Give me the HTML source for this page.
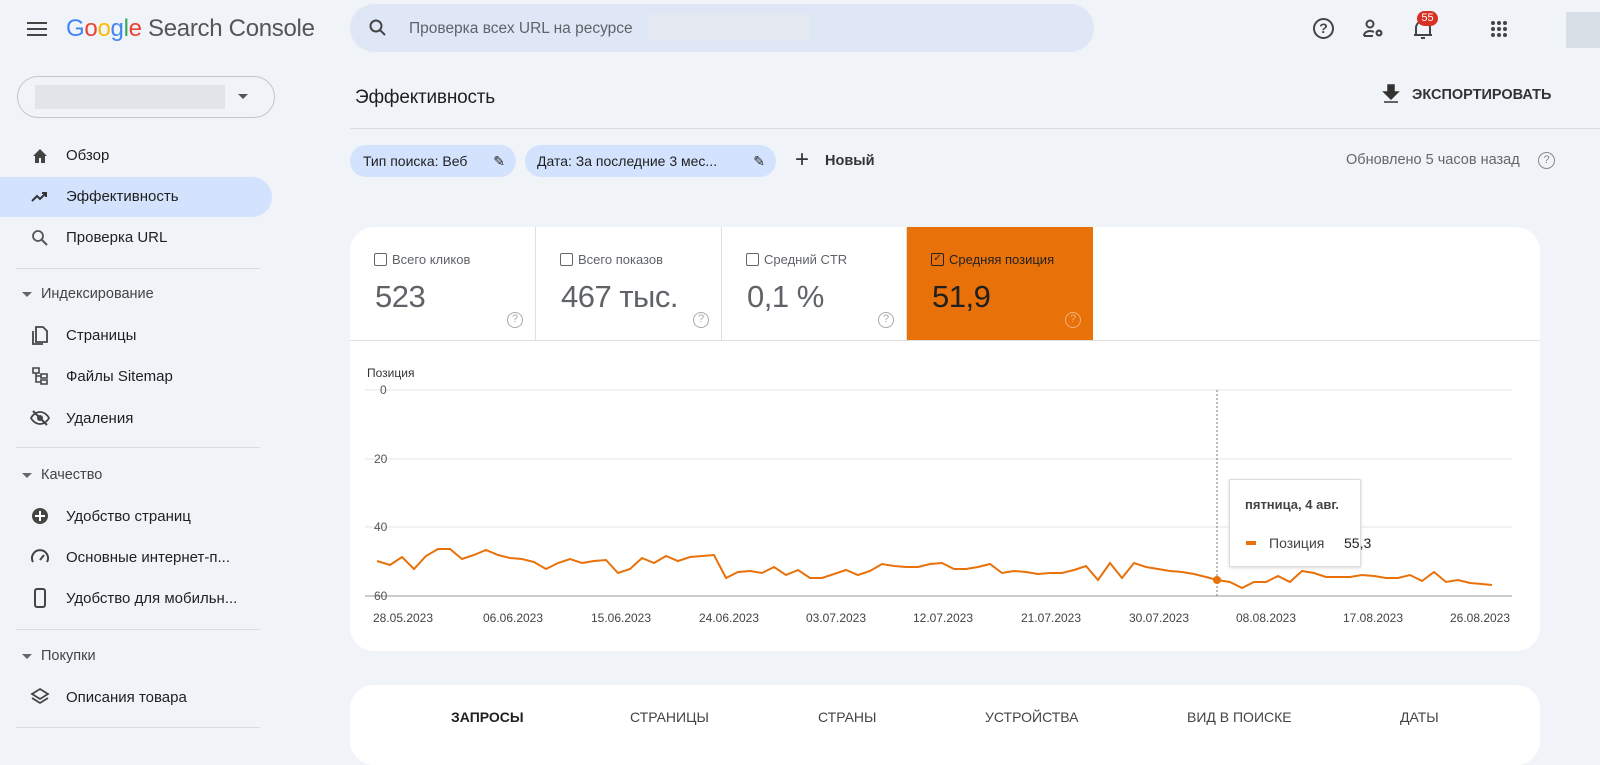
<!DOCTYPE html>
<html><head><meta charset="utf-8"><style>
*{box-sizing:border-box;margin:0;padding:0}
body{width:1600px;height:755px;overflow:hidden;background:#f0f4f9;font-family:"Liberation Sans",Arial,sans-serif;color:#1f1f1f;position:relative}
.a{position:absolute}
.nav{position:absolute;left:66px;font-size:15px;color:#1f1f1f}
.ic{position:absolute;left:30px;width:20px;height:20px}
.sec{position:absolute;left:41px;font-size:14.5px;color:#444}
.tri{position:absolute;left:22px;width:0;height:0;border-left:5px solid transparent;border-right:5px solid transparent;border-top:5px solid #666}
.hr{position:absolute;left:16px;width:244px;height:1px;background:#dadce0}
.tile{position:absolute;top:227px;height:113px;border-right:1px solid #e0e0e0}
.tile .l{position:absolute;left:24px;top:25px;font-size:13px;color:#5f6368;white-space:nowrap}
.tile .cb{display:inline-block;width:13px;height:13px;border:1.5px solid #666;border-radius:2px;vertical-align:-2px;margin-right:5px;font-size:10px;line-height:10px;text-align:center;overflow:hidden}
.tile .v{position:absolute;left:25px;top:52px;font-size:31px;color:#5f6368;letter-spacing:-0.5px}
.tile .q{position:absolute;right:12px;bottom:12px;width:16px;height:16px;border:1.5px solid #aaa;border-radius:50%;font-size:11px;text-align:center;line-height:13px;color:#aaa}
.chip{position:absolute;top:145px;height:32px;border-radius:16px;background:#d3e3fd;font-size:14px;line-height:32px;padding-left:13px}
.tab{position:absolute;top:709px;font-size:14px;color:#444}
</style></head><body>
<div class="a" style="left:27px;top:22px;width:20px;height:2px;background:#444;box-shadow:0 6px 0 #444,0 12px 0 #444"></div>
<div class="a" style="left:66px;top:15px;font-size:24px;letter-spacing:-0.3px"><span style="color:#4285f4">G</span><span style="color:#ea4335">o</span><span style="color:#fbbc05">o</span><span style="color:#4285f4">g</span><span style="color:#34a853">l</span><span style="color:#ea4335">e</span> <span style="color:#555">Search Console</span></div>
<div class="a" style="left:350px;top:4px;width:744px;height:48px;border-radius:24px;background:#dfe7f6"></div>
<svg class="a" style="left:368px;top:18px" width="20" height="20" viewBox="0 0 20 20"><circle cx="8" cy="8" r="5.5" fill="none" stroke="#444" stroke-width="2"/><path d="M12 12l5 5" stroke="#444" stroke-width="2"/></svg>
<div class="a" style="left:409px;top:20px;font-size:15.5px;color:#5f6368">Проверка всех URL на ресурсе</div>
<div class="a" style="left:648px;top:14px;width:162px;height:26px;background:#e4e8f0"></div>
<div class="a" style="left:1313px;top:18px;width:21px;height:21px;border:2px solid #444;border-radius:50%;font-size:14px;font-weight:bold;text-align:center;line-height:17px;color:#444">?</div>
<svg class="a" style="left:1362px;top:17px" width="24" height="24" viewBox="0 0 24 24"><circle cx="8" cy="7" r="3.5" fill="none" stroke="#444" stroke-width="2"/><path d="M2 19c0-4 4-5 6-5s3 .5 4 1M2 19h9" fill="none" stroke="#444" stroke-width="2"/><circle cx="17" cy="16" r="3.5" fill="#444"/><circle cx="17" cy="16" r="1.3" fill="#f0f4f9"/></svg>
<svg class="a" style="left:1412px;top:18px" width="22" height="22" viewBox="0 0 22 22"><path d="M4 17V10a7 7 0 0114 0v7zM2 17h18M9 20h4" fill="none" stroke="#444" stroke-width="2"/></svg>
<div class="a" style="left:1417px;top:11px;width:21px;height:15px;border-radius:8px;background:#d93025;color:#fff;font-size:11px;text-align:center;line-height:15px">55</div>
<div class="a" style="left:1491px;top:21px;width:4px;height:4px;background:#444;border-radius:50%;box-shadow:6px 0 #444,12px 0 #444,0 6px #444,6px 6px #444,12px 6px #444,0 12px #444,6px 12px #444,12px 12px #444"></div>
<div class="a" style="left:1566px;top:12px;width:34px;height:36px;background:#d5dfe5"></div>
<div class="a" style="left:17px;top:76px;width:258px;height:42px;border:1px solid #c4c7c5;border-radius:21px"></div>
<div class="a" style="left:35px;top:85px;width:190px;height:24px;background:#e2e4ea"></div>
<div class="a" style="left:238px;top:94px;border-left:5px solid transparent;border-right:5px solid transparent;border-top:5px solid #555"></div>
<div class="a" style="left:0;top:177px;width:272px;height:40px;background:#d3e3fd;border-radius:0 20px 20px 0"></div>
<svg class="ic" style="top:146px" viewBox="0 0 20 20"><path d="M3 10L10 3l7 7h-2v7h-4v-5H9v5H5v-7z" fill="#444"/></svg>
<div class="nav" style="top:147px">Обзор</div>
<svg class="ic" style="top:187px" viewBox="0 0 20 20"><path d="M2 14l5-5 3 3 6-6M12 6h4v4" fill="none" stroke="#333" stroke-width="2"/></svg>
<div class="nav" style="top:188px">Эффективность</div>
<svg class="ic" style="top:228px" viewBox="0 0 20 20"><circle cx="8" cy="8" r="5" fill="none" stroke="#555" stroke-width="1.8"/><path d="M12 12l5 5" stroke="#555" stroke-width="2"/></svg>
<div class="nav" style="top:229px">Проверка URL</div>
<div class="hr" style="top:268px"></div>
<div class="tri" style="top:292px"></div><div class="sec" style="top:286px">Индексирование</div>
<svg class="ic" style="top:325px" viewBox="0 0 20 20"><path d="M6 5V2h7l4 4v11H6zM3 6v13h10" fill="none" stroke="#444" stroke-width="1.8"/></svg>
<div class="nav" style="top:327px">Страницы</div>
<svg class="ic" style="top:366px" viewBox="0 0 20 20"><path d="M3 2h6v5H3zM11 8h6v4h-6zM11 14h6v4h-6zM6 7v9h5M6 10h5" fill="none" stroke="#444" stroke-width="1.6"/></svg>
<div class="nav" style="top:368px">Файлы Sitemap</div>
<svg class="ic" style="top:408px" viewBox="0 0 20 20"><path d="M1 10s3-6 9-6 9 6 9 6-3 6-9 6-9-6-9-6z" fill="none" stroke="#444" stroke-width="1.8"/><circle cx="10" cy="10" r="3" fill="#444"/><path d="M3 3l14 14" stroke="#444" stroke-width="2"/></svg>
<div class="nav" style="top:410px">Удаления</div>
<div class="hr" style="top:447px"></div>
<div class="tri" style="top:473px"></div><div class="sec" style="top:467px">Качество</div>
<svg class="ic" style="top:506px" viewBox="0 0 20 20"><circle cx="10" cy="10" r="8" fill="#444"/><path d="M10 5v10M5 10h10" stroke="#fff" stroke-width="2"/></svg>
<div class="nav" style="top:508px">Удобство страниц</div>
<svg class="ic" style="top:547px" viewBox="0 0 20 20"><path d="M3 15a8 8 0 1114 0" fill="none" stroke="#444" stroke-width="2"/><path d="M10 13l4-5" stroke="#444" stroke-width="2"/></svg>
<div class="nav" style="top:549px">Основные интернет-п...</div>
<svg class="ic" style="top:588px" viewBox="0 0 20 20"><rect x="5" y="1" width="10" height="18" rx="2" fill="none" stroke="#444" stroke-width="2"/></svg>
<div class="nav" style="top:590px">Удобство для мобильн...</div>
<div class="hr" style="top:629px"></div>
<div class="tri" style="top:654px"></div><div class="sec" style="top:648px">Покупки</div>
<svg class="ic" style="top:687px" viewBox="0 0 20 20"><path d="M10 2l8 5-8 5-8-5zM2 11l8 5 8-5" fill="none" stroke="#444" stroke-width="1.8"/></svg>
<div class="nav" style="top:689px">Описания товара</div>
<div class="hr" style="top:727px"></div>
<div class="a" style="left:355px;top:87px;font-size:19px;color:#1f1f1f;letter-spacing:-0.2px">Эффективность</div>
<svg class="a" style="left:1381px;top:83px" width="20" height="22" viewBox="0 0 20 22"><path d="M7 2h6v7h4l-7 7-7-7h4zM3 19h14" fill="#333" stroke="#333" stroke-width="1.5"/></svg>
<div class="a" style="left:1412px;top:87px;font-size:14.5px;font-weight:bold;color:#333">ЭКСПОРТИРОВАТЬ</div>
<div class="a" style="left:350px;top:128px;width:1250px;height:1px;background:#dadce0"></div>
<div class="chip" style="left:350px;width:166px">Тип поиска: Веб<span style="position:absolute;right:11px;top:0">✎</span></div>
<div class="chip" style="left:525px;width:251px;padding-left:12px">Дата: За последние 3 мес...<span style="position:absolute;right:11px;top:0">✎</span></div>
<div class="a" style="left:795px;top:146px;font-size:24px;color:#333;line-height:28px">+</div>
<div class="a" style="left:825px;top:153px;font-size:14.5px;font-weight:bold;color:#333">Новый</div>
<div class="a" style="left:1346px;top:152px;font-size:14.5px;color:#666">Обновлено 5 часов назад</div>
<div class="a" style="left:1538px;top:152px;width:17px;height:17px;border:1.5px solid #888;border-radius:50%;font-size:11px;text-align:center;line-height:14px;color:#888">?</div>
<div class="a" style="left:350px;top:227px;width:1190px;height:424px;background:#fff;border-radius:24px;overflow:hidden"></div>
<div class="tile" style="left:350px;width:186px"><div class="l"><span class="cb"></span>Всего кликов</div><div class="v">523</div><div class="q">?</div></div>
<div class="tile" style="left:536px;width:186px"><div class="l"><span class="cb"></span>Всего показов</div><div class="v">467 тыс.</div><div class="q">?</div></div>
<div class="tile" style="left:722px;width:185px"><div class="l"><span class="cb"></span>Средний CTR</div><div class="v">0,1 %</div><div class="q">?</div></div>
<div class="tile" style="left:907px;width:186px;background:#e8710a;border:none"><div class="l" style="color:#222"><span class="cb" style="border-color:#222;color:#222">✓</span>Средняя позиция</div><div class="v" style="color:#202020">51,9</div><div class="q" style="border-color:#f5b27a;color:#f5b27a">?</div></div>
<div class="a" style="left:350px;top:340px;width:1190px;height:1px;background:#e0e0e0"></div>
<svg class="a" style="left:350px;top:340px" width="1190" height="311" viewBox="350 340 1190 311" font-family="Liberation Sans,Arial,sans-serif">
<text x="367" y="377" font-size="12" fill="#333">Позиция</text>
<g stroke="#e6e6e6" stroke-width="1"><line x1="365" y1="390" x2="1512" y2="390"/><line x1="365" y1="459" x2="1512" y2="459"/><line x1="365" y1="527" x2="1512" y2="527"/></g>
<line x1="365" y1="596" x2="1512" y2="596" stroke="#999"/>
<g font-size="12" fill="#555"><text x="380" y="394">0</text><text x="374" y="463">20</text><text x="374" y="531">40</text><text x="374" y="600">60</text></g>
<g font-size="12" fill="#444" text-anchor="middle"><text x="403" y="622">28.05.2023</text><text x="513" y="622">06.06.2023</text><text x="621" y="622">15.06.2023</text><text x="729" y="622">24.06.2023</text><text x="836" y="622">03.07.2023</text><text x="943" y="622">12.07.2023</text><text x="1051" y="622">21.07.2023</text><text x="1159" y="622">30.07.2023</text><text x="1266" y="622">08.08.2023</text><text x="1373" y="622">17.08.2023</text><text x="1480" y="622">26.08.2023</text></g>
<line x1="1217" y1="390" x2="1217" y2="596" stroke="#777" stroke-dasharray="2,2"/>
<polyline fill="none" stroke="#e8710a" stroke-width="2" points="377,561 390,565 402,557 414,569 426,556 438,549 450,549 462,559 474,555 486,550 498,555 510,558 522,559 534,562 546,569 558,563 570,559 582,563 594,561 606,560 618,573 630,569 642,558 654,563 666,556 678,561 690,557 702,556 714,555 726,578 738,572 750,571 762,573 774,567 786,575 798,570 810,578 822,578 834,574 846,570 858,575 870,571 882,564 894,566 906,567 918,567 930,564 942,563 954,569 966,569 978,567 990,564 1002,573 1014,571 1026,572 1038,574 1050,573 1062,573 1074,570 1086,566 1098,580 1110,563 1122,578 1134,563 1146,567 1158,569 1170,571 1182,572 1194,574 1206,577 1217,580 1230,582 1242,588 1254,582 1266,582 1278,576 1290,582 1302,571 1314,573 1326,577 1338,577 1350,577 1362,575 1374,576 1386,578 1398,578 1410,575 1422,581 1434,572 1446,582 1458,580 1470,583 1482,584 1492,585"/>
<circle cx="1217" cy="580" r="4" fill="#e8710a"/>
</svg>
<div class="a" style="left:1229px;top:479px;width:132px;height:88px;background:#fff;border:1px solid #ddd;box-shadow:0 1px 3px rgba(0,0,0,.15)"></div>
<div class="a" style="left:1245px;top:497px;font-size:13px;font-weight:bold;color:#444">пятница, 4 авг.</div>
<div class="a" style="left:1246px;top:541px;width:10px;height:4px;background:#e8710a"></div>
<div class="a" style="left:1269px;top:535px;font-size:14px;color:#444">Позиция</div>
<div class="a" style="left:1344px;top:535px;font-size:14px;color:#222">55,3</div>
<div class="a" style="left:350px;top:685px;width:1190px;height:80px;background:#fff;border-radius:24px"></div>
<div class="tab" style="left:451px;color:#1f1f1f;font-weight:bold">ЗАПРОСЫ</div>
<div class="tab" style="left:630px">СТРАНИЦЫ</div>
<div class="tab" style="left:818px">СТРАНЫ</div>
<div class="tab" style="left:985px">УСТРОЙСТВА</div>
<div class="tab" style="left:1187px">ВИД В ПОИСКЕ</div>
<div class="tab" style="left:1400px">ДАТЫ</div>
</body></html>
